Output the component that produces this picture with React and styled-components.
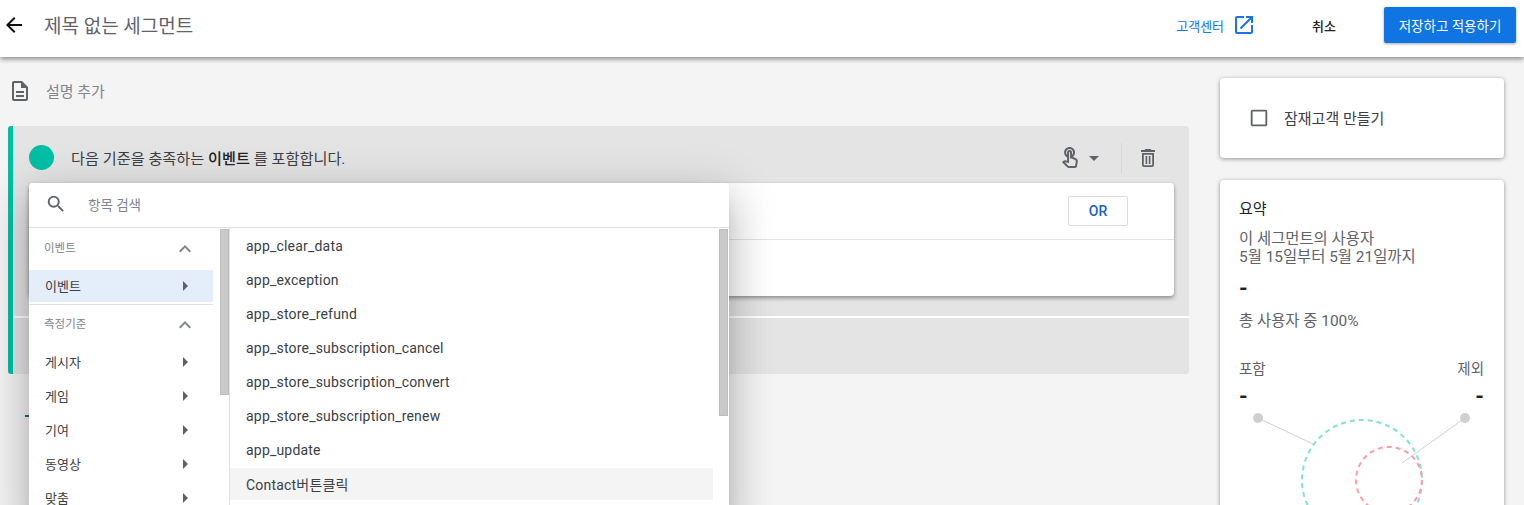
import React from "react";
import styled, { createGlobalStyle } from "styled-components";
import {
  MdArrowBack,
  MdArrowDropDown,
  MdArrowRight,
  MdCheckBoxOutlineBlank,
  MdExpandLess,
  MdOpenInNew,
  MdOutlineDescription,
  MdOutlineTouchApp,
  MdSearch,
} from "react-icons/md";

const GlobalStyle = createGlobalStyle`
  html, body {
    margin: 0;
    height: 505px;
    overflow: hidden;
    background: #f4f4f4;
    font-family: Roboto, "Noto Sans CJK KR", sans-serif;
  }
  * { box-sizing: border-box; }
`;

const Page = styled.div`
  position: relative;
  width: 1524px;
  height: 505px;
  overflow: hidden;
  background: #f4f4f4;
`;

// Header
const Header = styled.header`
  position: relative;
  z-index: 3;
  display: flex;
  align-items: center;
  height: 57px;
  padding: 0 8px 7px 2px;
  background: #fff;
  box-shadow: 0 2px 5px rgba(0, 0, 0, 0.45);
`;

const BackIcon = styled(MdArrowBack)`
  font-size: 24px;
  color: #111;
`;

const Title = styled.h1`
  flex: 1;
  margin: 0 0 2px 18px;
  font-size: 19px;
  font-weight: 400;
  color: #5f6368;
`;

const HelpLink = styled.a`
  display: flex;
  align-items: center;
  gap: 8px;
  font-size: 13px;
  color: #1a73e8;
`;

const CancelButton = styled.button`
  margin: 0 48px 0 56px;
  padding: 0;
  border: 0;
  background: none;
  font: inherit;
  font-size: 13px;
  font-weight: 500;
  color: #222;
`;

const SaveButton = styled.button`
  width: 132px;
  height: 36px;
  padding: 0;
  border: 0;
  border-radius: 2px;
  background: #0e75e2;
  box-shadow: 0 1px 3px rgba(0, 0, 0, 0.35);
  font: inherit;
  font-size: 13.5px;
  color: #fff;
`;

// Page body
const Body = styled.div`
  display: flex;
  align-items: flex-start;
  height: 448px;
`;

const Main = styled.main`
  width: 1189px;
  margin-right: 31px;
  padding-left: 8px;
`;

const DescriptionRow = styled.div`
  display: flex;
  align-items: center;
  gap: 14px;
  height: 69px;
  padding: 0 0 2px 0;
  font-size: 15px;
  color: #80868b;
`;

const DescriptionIcon = styled(MdOutlineDescription)`
  font-size: 24px;
  color: #5f6368;
`;

const Group = styled.section`
  height: 248px;
  border-left: 5px solid #00bfa5;
  border-radius: 3px;
  background: #e4e4e4;
`;

const GroupHeader = styled.div`
  display: flex;
  align-items: center;
  height: 57px;
  padding: 6px 29px 0 16px;
  font-size: 15.2px;
  color: #3c4043;
`;

const Dot = styled.span`
  width: 25px;
  height: 25px;
  margin-right: 17px;
  border-radius: 50%;
  background: #00bfa5;
`;

const GroupTitle = styled.div`
  flex: 1;
  margin-bottom: 2px;

  b {
    font-weight: 500;
    color: #202124;
  }
`;

const ScopeButton = styled.div`
  display: flex;
  align-items: center;
  color: #5f6368;
  font-size: 24px;
  margin-left: -2px;
`;

const VerticalRule = styled.span`
  width: 1px;
  height: 30px;
  margin: 0 14px 0 15px;
  background: #d6d6d6;
`;

const TrashIcon = () => (
  <svg width="24" height="24" viewBox="0 0 24 24" fill="#5f6368">
    <path d="M15.5 4l-1-1h-5l-1 1H5v2h14V4h-3.5zM6 7v12c0 1.1.9 2 2 2h8c1.1 0 2-.9 2-2V7H6zm10.2 12.2H7.8V8.8h8.4v10.4z" />
    <rect x="9.6" y="10" width="1.6" height="8" />
    <rect x="12.8" y="10" width="1.6" height="8" />
  </svg>
);

const ConditionCard = styled.div`
  width: 1145px;
  height: 113px;
  margin-left: 16px;
  border-radius: 4px;
  background: #fff;
  box-shadow: 0 2px 4px rgba(0, 0, 0, 0.4);
`;

const ConditionTop = styled.div`
  display: flex;
  align-items: center;
  justify-content: flex-end;
  height: 57px;
  padding-right: 46px;
  border-bottom: 1px solid #e3e3e3;
`;

const OrButton = styled.button`
  width: 60px;
  height: 30px;
  padding: 0;
  border: 1px solid #dadce0;
  border-radius: 2px;
  background: #fff;
  font: inherit;
  font-size: 14px;
  font-weight: 500;
  color: #1a62c5;
`;

const GroupFooter = styled.div`
  height: 58px;
  margin-top: 20px;
  border-top: 2px solid #fff;
`;

const AddLink = styled.div`
  width: 4px;
  height: 2px;
  margin: 41px 0 0 17px;
  background: #1a62c5;
`;

// Right column
const Aside = styled.aside`
  display: flex;
  flex-direction: column;
  gap: 22px;
  width: 284px;
  padding-top: 21px;
`;

const Card = styled.div`
  border-radius: 4px;
  background: #fff;
  box-shadow: 0 1px 4px rgba(0, 0, 0, 0.4);
`;

const AudienceCard = styled(Card)`
  display: flex;
  align-items: center;
  gap: 14px;
  height: 80px;
  padding: 0 0 1px 28px;
  font-size: 15px;
  color: #3c4043;
`;

const CheckIcon = styled(MdCheckBoxOutlineBlank)`
  font-size: 22px;
  color: #5f6368;
`;

const SummaryCard = styled(Card)`
  height: 340px;
  padding: 18px 20px 0 19px;
`;

const SummaryTitle = styled.h2`
  margin: 0 0 10px;
  font-size: 15px;
  line-height: 22px;
  font-weight: 400;
  color: #202124;
`;

const SummaryText = styled.p`
  margin: 0;
  font-size: ${(p) => (p.$small ? 14.5 : 15.4)}px;
  line-height: 18px;
  color: #5f6368;
`;

const Dash = styled.div`
  height: ${(p) => p.$height}px;
  font-size: 22px;
  line-height: ${(p) => p.$height}px;
  font-weight: 700;
  color: #202124;
`;

const SplitRow = styled.div`
  display: flex;
  justify-content: space-between;
  margin-top: ${(p) => p.$top}px;
`;

const Chart = styled.svg`
  display: block;
  margin: 0 -20px 0 -19px;
  overflow: visible;
`;

// Category picker over the group
const Picker = styled.div`
  position: absolute;
  z-index: 2;
  top: 183px;
  left: 29px;
  width: 700px;
  height: 340px;
  border-radius: 4px 4px 0 0;
  background: #fff;
  box-shadow: 0 11px 15px -7px rgba(0, 0, 0, 0.2), 0 24px 38px 3px rgba(0, 0, 0, 0.14),
    0 9px 46px 8px rgba(0, 0, 0, 0.12);
`;

const SearchRow = styled.div`
  display: flex;
  align-items: center;
  height: 45px;
  padding: 0 0 3px 16px;
  border-bottom: 1px solid #e0e0e0;
  font-size: 13.5px;
  color: #80868b;
`;

const SearchIcon = styled(MdSearch)`
  margin-right: 21px;
  font-size: 22px;
  color: #5f6368;
`;

const Panes = styled.div`
  display: flex;
  height: 295px;
`;

const CategoryPane = styled.div`
  position: relative;
  width: 201px;
  padding-right: 16px;
  border-right: 1px solid #e0e0e0;
`;

const EventPane = styled.div`
  position: relative;
  flex: 1;
  padding: 1px 16px 0 0;
`;

const Scrollbar = styled.div`
  position: absolute;
  top: 1px;
  right: ${(p) => p.$right}px;
  width: 9px;
  height: ${(p) => p.$height}px;
  border: 1px solid #bdbdbd;
  background: #c9c9c9;
`;

const SectionHead = styled.div`
  display: flex;
  align-items: center;
  justify-content: space-between;
  height: ${(p) => p.$height}px;
  padding: 0 16px 0 15px;
  font-size: 11.5px;
  color: #80868b;

  span {
    margin-top: -4px;
  }
`;

const ExpandIcon = styled(MdExpandLess)`
  font-size: 24px;
  color: #80868b;
`;

const CategoryRow = styled.div`
  display: flex;
  align-items: center;
  justify-content: space-between;
  height: ${(p) => (p.$active ? 32 : 34)}px;
  padding: 0 16px 2px 16px;
  background: ${(p) => (p.$active ? "#e3eefa" : "transparent")};
  font-size: 13px;
  color: #3c4043;
`;

const ArrowIcon = styled(MdArrowRight)`
  font-size: 24px;
  color: #5f6368;
  margin-bottom: -2px;
`;

const PaneDivider = styled.div`
  height: 1px;
  margin-top: 2px;
  background: #e0e0e0;
`;

const EventRow = styled.div`
  display: flex;
  align-items: center;
  height: ${(p) => (p.$hover ? 32 : 34)}px;
  margin-top: ${(p) => (p.$hover ? 1 : 0)}px;
  padding-left: 16px;
  background: ${(p) => (p.$hover ? "#f4f4f4" : "transparent")};
  font-size: 14px;
  letter-spacing: 0.2px;
  color: #3c4043;
`;

const categories = ["게시자", "게임", "기여", "동영상", "맞춤"];

const events = [
  "app_clear_data",
  "app_exception",
  "app_store_refund",
  "app_store_subscription_cancel",
  "app_store_subscription_convert",
  "app_store_subscription_renew",
  "app_update",
];

const App = () => {
  return (
    <Page>
      <GlobalStyle />
      <Header>
        <BackIcon />
        <Title>제목 없는 세그먼트</Title>
        <HelpLink>
          고객센터
          <MdOpenInNew size={24} />
        </HelpLink>
        <CancelButton>취소</CancelButton>
        <SaveButton>저장하고 적용하기</SaveButton>
      </Header>

      <Body>
        <Main>
          <DescriptionRow>
            <DescriptionIcon />
            설명 추가
          </DescriptionRow>
          <Group>
            <GroupHeader>
              <Dot />
              <GroupTitle>
                다음 기준을 충족하는 <b>이벤트</b> 를 포함합니다.
              </GroupTitle>
              <ScopeButton>
                <MdOutlineTouchApp />
                <MdArrowDropDown />
              </ScopeButton>
              <VerticalRule />
              <TrashIcon />
            </GroupHeader>
            <ConditionCard>
              <ConditionTop>
                <OrButton>OR</OrButton>
              </ConditionTop>
            </ConditionCard>
            <GroupFooter />
          </Group>
          <AddLink />
        </Main>

        <Aside>
          <AudienceCard>
            <CheckIcon />
            잠재고객 만들기
          </AudienceCard>
          <SummaryCard>
            <SummaryTitle>요약</SummaryTitle>
            <SummaryText>
              이 세그먼트의 사용자
              <br />
              5월 15일부터 5월 21일까지
            </SummaryText>
            <Dash $height={46}>-</Dash>
            <SummaryText>총 사용자 중 100%</SummaryText>
            <SplitRow $top={31}>
              <SummaryText $small>포함</SummaryText>
              <SummaryText $small>제외</SummaryText>
            </SplitRow>
            <SplitRow $top={0}>
              <Dash $height={36}>-</Dash>
              <Dash $height={36}>-</Dash>
            </SplitRow>
            <Chart width="284" height="130" viewBox="1220 415 284 130">
              <line x1="1258" y1="418" x2="1313" y2="444" stroke="#d0d0d0" />
              <line x1="1465" y1="418" x2="1402" y2="463" stroke="#d0d0d0" />
              <circle cx="1258" cy="418" r="5" fill="#cfcfcf" />
              <circle cx="1465" cy="418" r="5" fill="#cfcfcf" />
              <circle cx="1362" cy="480" r="60" fill="none" stroke="#7fe3d3" strokeWidth="2" strokeDasharray="5 4" />
              <circle cx="1389" cy="480" r="33" fill="none" stroke="#ff9ea6" strokeWidth="2" strokeDasharray="5 4" />
            </Chart>
          </SummaryCard>
        </Aside>
      </Body>

      <Picker>
        <SearchRow>
          <SearchIcon />
          항목 검색
        </SearchRow>
        <Panes>
          <CategoryPane>
            <Scrollbar $right={0} $height={166} />
            <SectionHead $height={42}>
              <span>이벤트</span>
              <ExpandIcon />
            </SectionHead>
            <CategoryRow $active>
              이벤트
              <ArrowIcon />
            </CategoryRow>
            <PaneDivider />
            <SectionHead $height={40}>
              <span>측정기준</span>
              <ExpandIcon />
            </SectionHead>
            {categories.map((name) => (
              <CategoryRow key={name}>
                {name}
                <ArrowIcon />
              </CategoryRow>
            ))}
          </CategoryPane>
          <EventPane>
            <Scrollbar $right={1} $height={187} />
            {events.map((name) => (
              <EventRow key={name}>{name}</EventRow>
            ))}
            <EventRow $hover>Contact버튼클릭</EventRow>
          </EventPane>
        </Panes>
      </Picker>
    </Page>
  );
};

export default App;
